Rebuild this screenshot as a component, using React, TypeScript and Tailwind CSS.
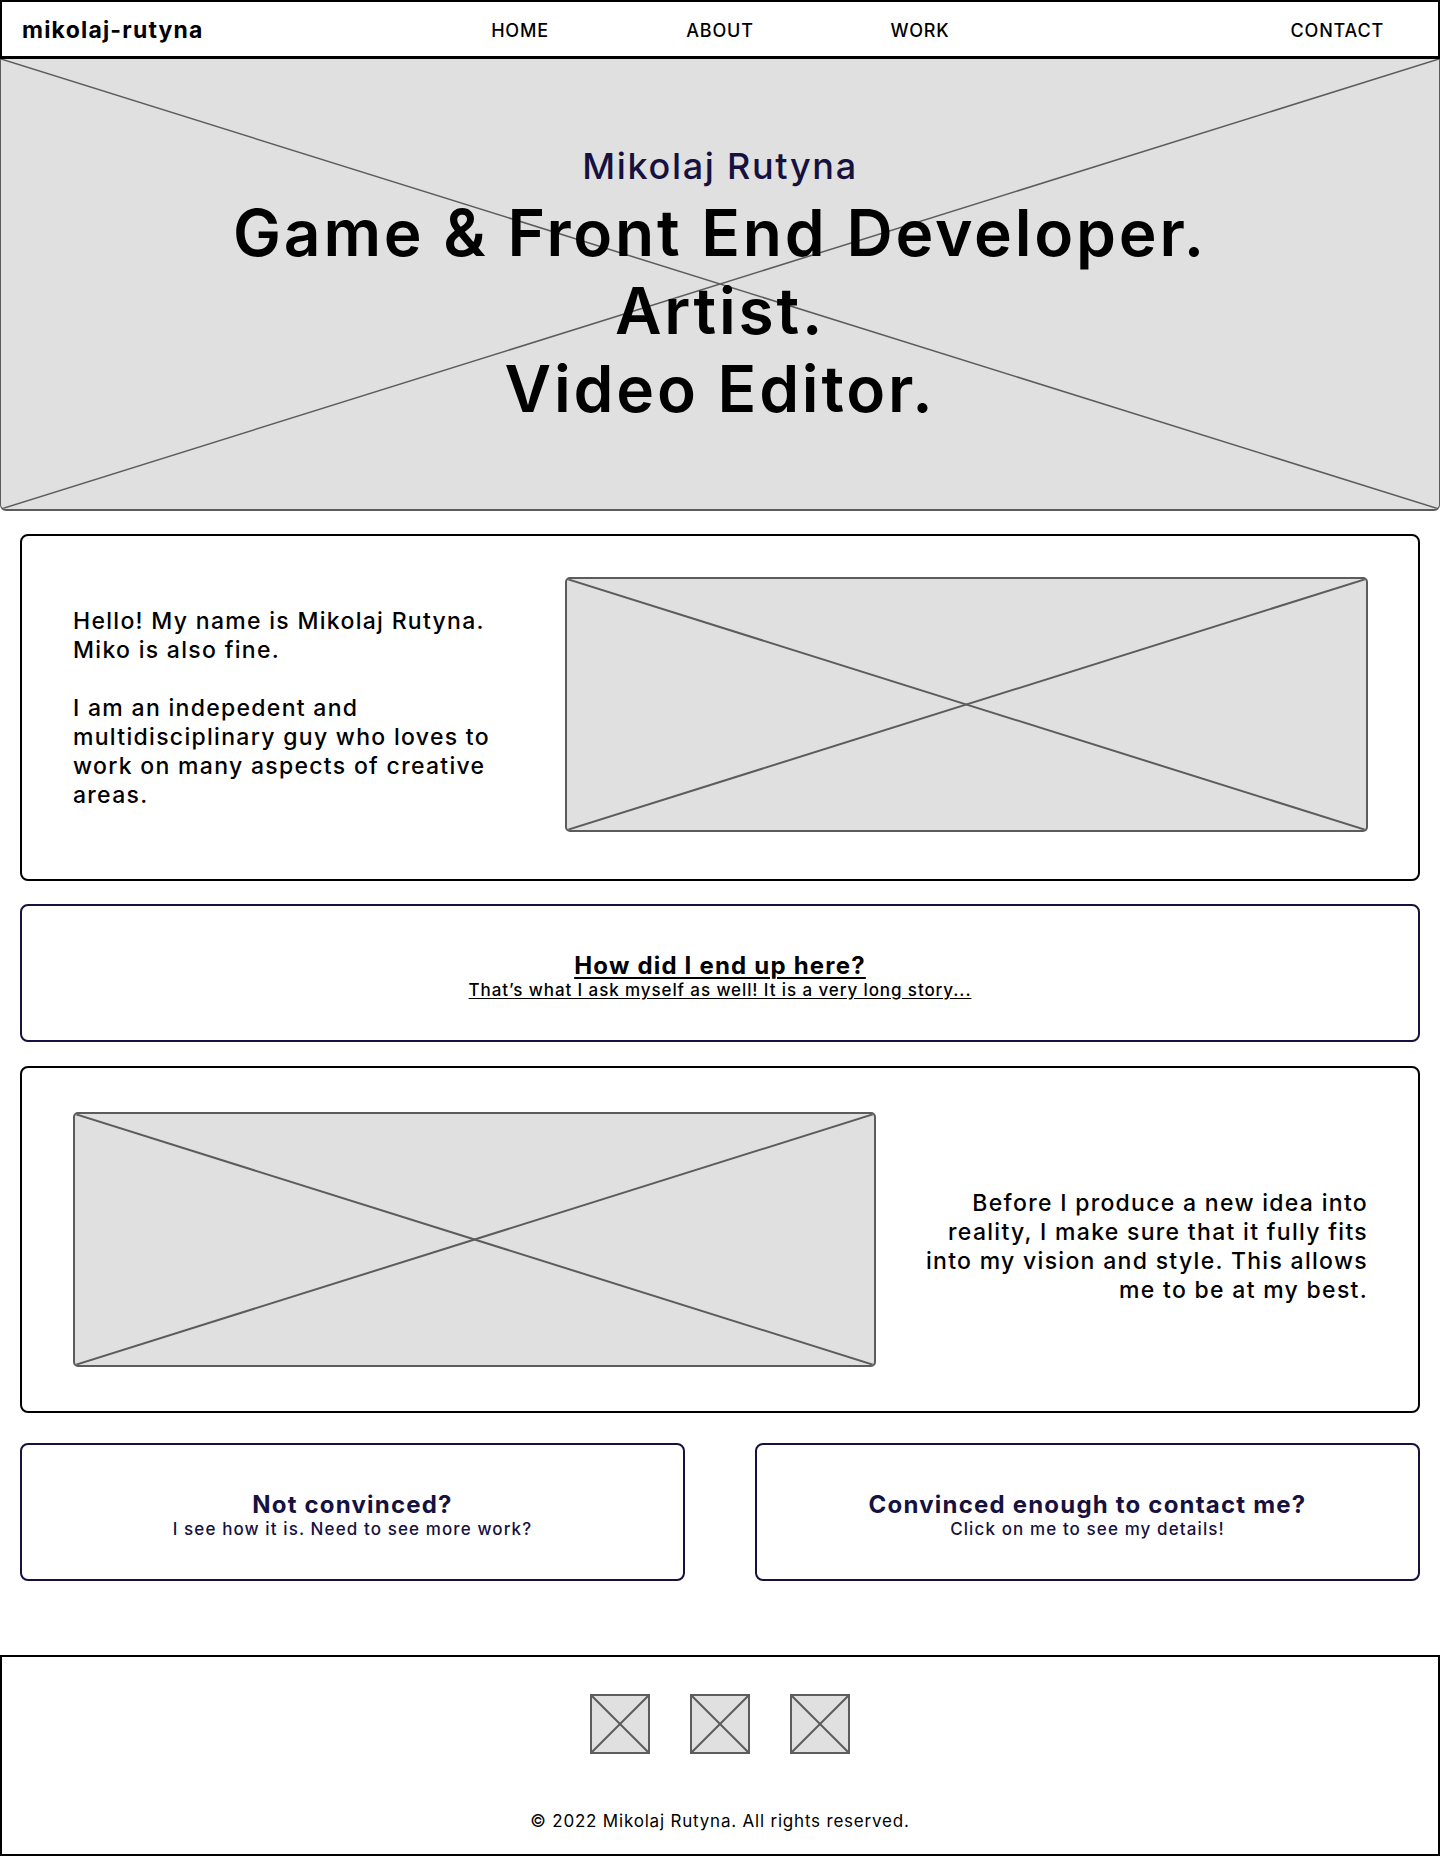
const navy = "text-[#16113f]";

function Cross({ className }: { className?: string }) {
  return (
    <div className={`relative bg-[#e0e0e0] border-2 border-[#5c5c5c] rounded-[5px] overflow-hidden ${className ?? ""}`}>
      <svg className="absolute inset-0 w-full h-full" viewBox="0 0 100 100" preserveAspectRatio="none">
        <line x1="0" y1="0" x2="100" y2="100" stroke="#5c5c5c" strokeWidth="2" vectorEffect="non-scaling-stroke" />
        <line x1="100" y1="0" x2="0" y2="100" stroke="#5c5c5c" strokeWidth="2" vectorEffect="non-scaling-stroke" />
      </svg>
    </div>
  );
}

function Header() {
  return (
    <header className="flex items-center h-[59px] pt-[3px] border-2 border-b-[3px] border-black bg-white">
      <div className="w-[418px] pl-[20px]">
        <span className="text-[23px] font-bold tracking-[1.2px] text-black">mikolaj-rutyna</span>
      </div>
      <nav className="flex text-[18px] font-medium tracking-[0.8px] text-black">
        <a className="w-[200px] text-center">HOME</a>
        <a className="w-[200px] text-center">ABOUT</a>
        <a className="w-[200px] text-center">WORK</a>
      </nav>
      <div className="flex-1 flex justify-end pr-[54px]">
        <a className="text-[18px] font-medium tracking-[0.8px] text-black">CONTACT</a>
      </div>
    </header>
  );
}

function Hero() {
  return (
    <section className="relative h-[452px] bg-[#e0e0e0] border-x border-b-2 border-[#5c5c5c] rounded-b-[6px] overflow-hidden">
      <svg className="absolute inset-0 w-full h-full" viewBox="0 0 100 100" preserveAspectRatio="none">
        <line x1="0" y1="0" x2="100" y2="100" stroke="#5c5c5c" strokeWidth="1.5" vectorEffect="non-scaling-stroke" />
        <line x1="100" y1="0" x2="0" y2="100" stroke="#5c5c5c" strokeWidth="1.5" vectorEffect="non-scaling-stroke" />
      </svg>
      <div className="relative flex flex-col items-center pt-[85px] text-center">
        <p className={`text-[36px] leading-[44px] font-medium tracking-[1.7px] ${navy}`}>Mikolaj Rutyna</p>
        <h1 className="mt-[6px] text-[64px] leading-[78px] font-semibold tracking-[2.8px] text-black">
          Game &amp; Front End Developer.
          <br />
          Artist.
          <br />
          Video Editor.
        </h1>
      </div>
    </section>
  );
}

export default function App() {
  return (
    <div className="w-[1440px] bg-white text-black" style={{ fontFamily: "Inter, 'Noto Sans', sans-serif" }}>
      <Header />
      <Hero />

      <main className="px-[20px] pt-[23px] pb-[74px] flex flex-col">
        {/* about */}
        <section className="flex items-center border-2 border-black rounded-[8px] pl-[51px] pr-[50px] pt-[41px] pb-[47px]">
          <div className="pt-[8px] text-[23px] leading-[29px] font-medium tracking-[1.3px] whitespace-nowrap">
            <p>
              Hello! My name is Mikolaj Rutyna.
              <br />
              Miko is also fine.
            </p>
            <p className="mt-[29px]">
              I am an indepedent and
              <br />
              multidisciplinary guy who loves to
              <br />
              work on many aspects of creative
              <br />
              areas.
            </p>
          </div>
          <Cross className="ml-auto w-[803px] h-[255px]" />
        </section>

        {/* story */}
        <section className="mt-[23px] h-[138px] pt-[6px] flex flex-col items-center justify-center border-2 border-[#16113f] rounded-[8px] text-black">
          <h2 className="text-[24px] leading-[28px] font-bold tracking-[1.2px] underline underline-offset-[3px] decoration-[2px]">
            How did I end up here?
          </h2>
          <p className="text-[17px] leading-[20px] font-medium tracking-[0.9px] underline underline-offset-[2px]">
            That’s what I ask myself as well! It is a very long story...
          </p>
        </section>

        {/* work */}
        <section className="mt-[24px] flex items-center border-2 border-black rounded-[8px] pl-[51px] pr-[50px] pt-[44px] pb-[44px]">
          <Cross className="w-[803px] h-[255px]" />
          <div className="ml-auto pt-[14px] text-right text-[23px] leading-[29px] font-medium tracking-[1.3px] whitespace-nowrap">
            Before I produce a new idea into
            <br />
            reality, I make sure that it fully fits
            <br />
            into my vision and style. This allows
            <br />
            me to be at my best.
          </div>
        </section>

        {/* ctas */}
        <div className="mt-[30px] flex gap-[70px]">
          <a className={`flex-1 h-[138px] pt-[6px] flex flex-col items-center justify-center border-2 border-[#16113f] rounded-[8px] ${navy}`}>
            <span className="text-[24px] leading-[28px] font-bold tracking-[1.2px]">Not convinced?</span>
            <span className="text-[17px] leading-[20px] font-medium tracking-[1.1px]">I see how it is. Need to see more work?</span>
          </a>
          <a className={`flex-1 h-[138px] pt-[6px] flex flex-col items-center justify-center border-2 border-[#16113f] rounded-[8px] ${navy}`}>
            <span className="text-[24px] leading-[28px] font-bold tracking-[1.2px]">Convinced enough to contact me?</span>
            <span className="text-[17px] leading-[20px] font-medium tracking-[1.1px]">Click on me to see my details!</span>
          </a>
        </div>
      </main>

      <footer className="h-[201px] border-2 border-black flex flex-col items-center pt-[37px]">
        <div className="flex gap-[40px]">
          <Cross className="w-[60px] h-[60px] rounded-none" />
          <Cross className="w-[60px] h-[60px] rounded-none" />
          <Cross className="w-[60px] h-[60px] rounded-none" />
        </div>
        <p className="mt-[55px] text-[17px] leading-[24px] tracking-[0.8px] text-black">© 2022 Mikolaj Rutyna. All rights reserved.</p>
      </footer>
    </div>
  );
}
